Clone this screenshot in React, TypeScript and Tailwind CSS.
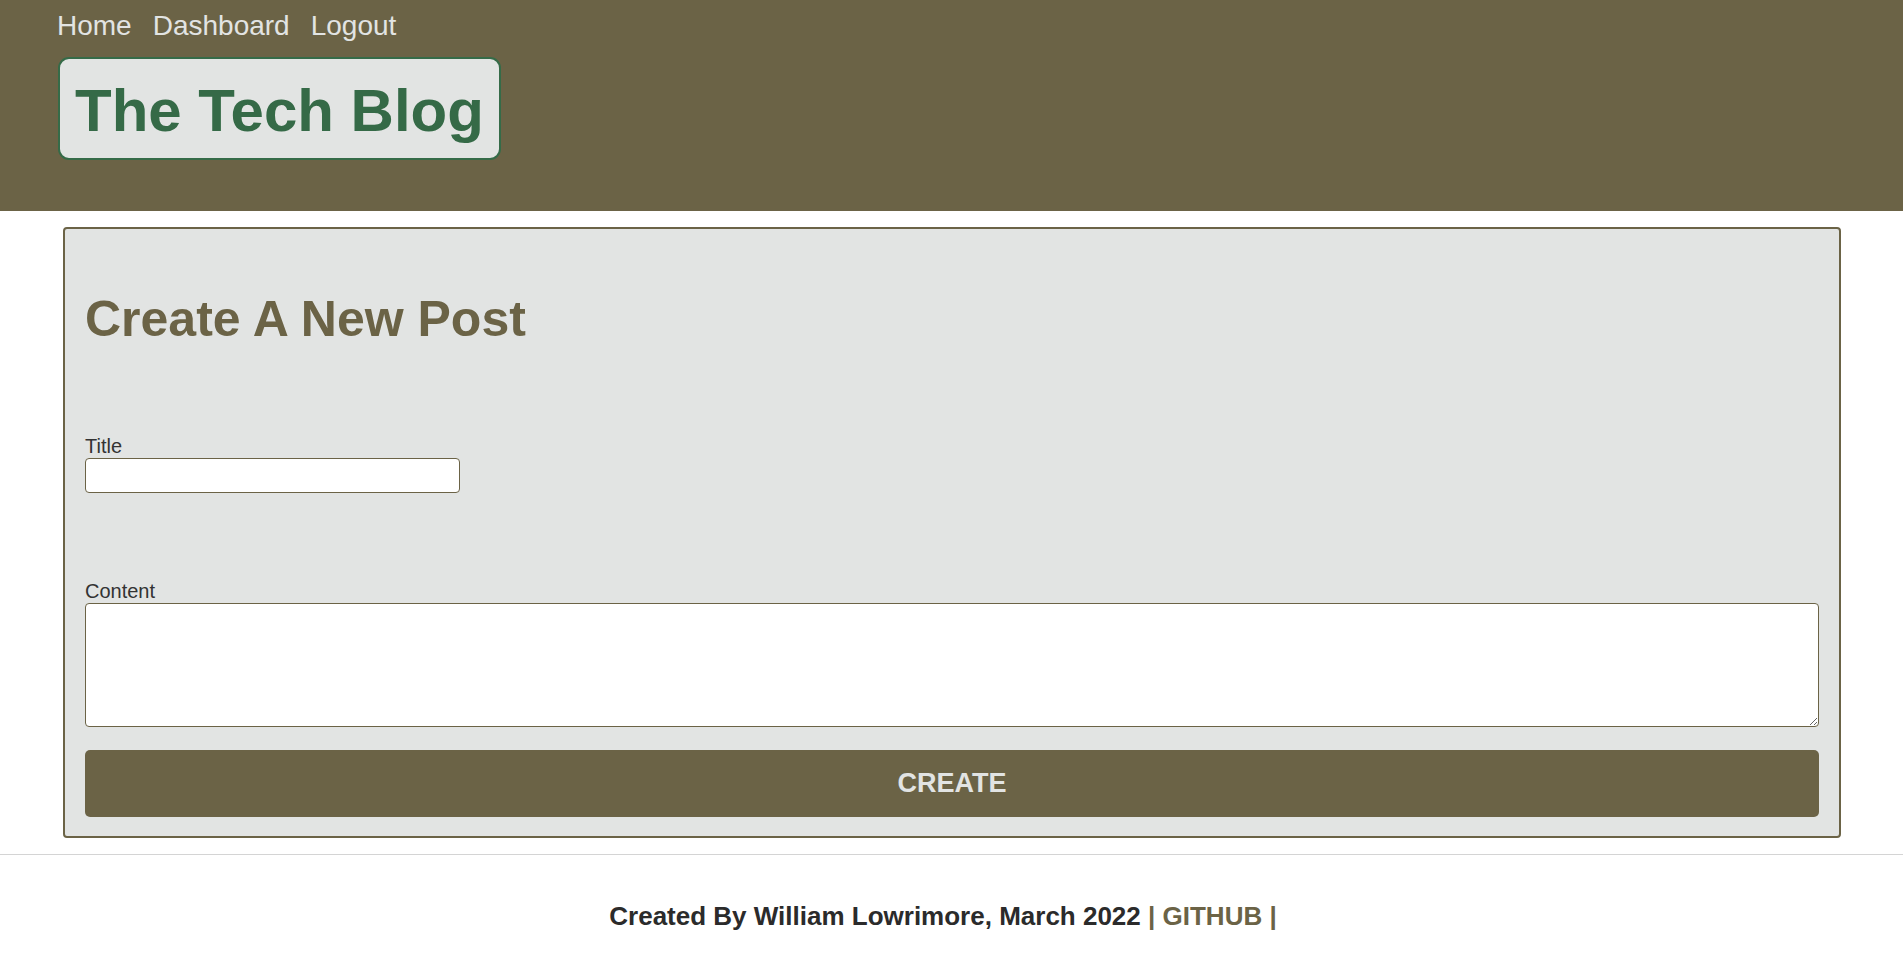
export default function App() {
  return (
    <div className="min-h-screen bg-white font-['Liberation_Sans',Arial,sans-serif]">
      {/* top bar with nav + blog title */}
      <header className="h-[211px] bg-[#6b6346] pl-[57px] pt-[10px]">
        <nav className="flex gap-[21px] text-[28px] leading-[32px] text-[#e2e4e3]">
          <a href="#">Home</a>
          <a href="#">Dashboard</a>
          <a href="#">Logout</a>
        </nav>
        <div className="ml-[1px] mt-[15px] inline-block rounded-[11px] border-2 border-[#356b48] bg-[#e2e4e3] px-[15px] pb-[13px] pt-[17px]">
          <h1 className="text-[60px] font-bold leading-[69px] text-[#356a47]">The Tech Blog</h1>
        </div>
      </header>

      <main className="pt-[16px]">
        <section className="ml-[63px] mr-[62px] rounded-[4px] border-2 border-[#6b6346] bg-[#e2e4e3] px-[20px] pb-[19px] pt-[62px]">
          <h2 className="text-[50px] font-bold leading-[57px] text-[#6b6346]">Create A New Post</h2>

          <form onSubmit={(e) => e.preventDefault()}>
            <label htmlFor="title" className="mt-[87px] block text-[20px] leading-[23px] text-[#333333]">
              Title
            </label>
            <input
              id="title"
              type="text"
              className="block h-[35px] w-[375px] rounded-[4px] border border-[#6b6346] bg-white px-2"
            />

            <label htmlFor="content" className="mt-[87px] block text-[20px] leading-[23px] text-[#333333]">
              Content
            </label>
            <textarea
              id="content"
              className="block h-[124px] w-full rounded-[4px] border border-[#6b6346] bg-white p-2"
            />

            <button
              type="submit"
              className="mt-[23px] block h-[67px] w-full rounded-[5px] bg-[#6b6346] text-[27px] font-bold text-[#e2e4e3]"
            >
              CREATE
            </button>
          </form>
        </section>
      </main>

      <footer className="mt-[16px] border-t border-[#d4d4d4] pr-[17px] pt-[46px] text-center">
        <p className="text-[26px] font-bold leading-[30px] text-[#2b2b2b]">
          Created By William Lowrimore, March 2022{" "}
          <span className="text-[#6b6346]">
            | <a href="#">GITHUB</a> |
          </span>
        </p>
      </footer>
    </div>
  );
}
